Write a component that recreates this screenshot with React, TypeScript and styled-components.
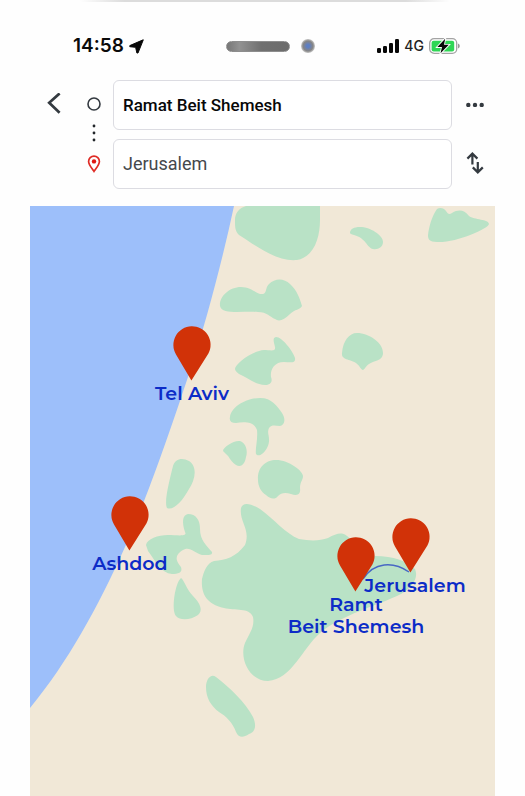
import React, { useState } from "react";
import styled, { createGlobalStyle } from "styled-components";

const GlobalStyle = createGlobalStyle`
  *, *::before, *::after { box-sizing: border-box; }
  html, body { margin: 0; background: #fefefe; }
  body { font-family: Roboto, "Liberation Sans", sans-serif; color: #111; }
`;

const Screen = styled.main`
  display: flex;
  flex-direction: column;
  min-height: 100vh;
  overflow: hidden;
`;

const Bezel = styled.div`
  height: 2px;
  margin: 0 75px 0 80px;
  border-radius: 2px;
  background: linear-gradient(90deg, #fefefe, #dcdcdc 12%, #dcdcdc 88%, #fefefe);
`;

const StatusBar = styled.div`
  display: grid;
  grid-template-columns: 1fr auto 1fr;
  align-items: center;
  height: 78px;
  padding: 10px 65px 0 73px;
  font-family: Inter, "Liberation Sans", sans-serif;
`;

const StatusGroup = styled.div<{ $end?: boolean }>`
  display: flex;
  align-items: center;
  justify-content: ${(p) => (p.$end ? "flex-end" : "flex-start")};
  gap: 5px;
`;

const Clock = styled.time`
  font-size: 19px;
  line-height: 24px;
  font-weight: 600;
  color: #0a0a0a;
`;

const Network = styled.span`
  font-size: 14px;
  line-height: 20px;
  font-weight: 500;
  color: #222;
`;

const Island = styled.div`
  display: flex;
  align-items: center;
  gap: 11px;
  margin-left: 8px;
`;

const Speaker = styled.span`
  width: 64px;
  height: 11px;
  border-radius: 6px;
  border: 1px solid #8d8d8d;
  background: linear-gradient(90deg, #777, #929292 20%, #707070 55%, #6c6c6c);
`;

const Camera = styled.span`
  width: 14px;
  height: 14px;
  border-radius: 50%;
  background: radial-gradient(circle, #5d7fc4 0 15%, #7582a0 34%, #858585 50%, #c4c4c4 70%);
`;

const Planner = styled.form`
  display: grid;
  grid-template-columns: 48px 35px minmax(0, 1fr) 45px;
  grid-template-rows: 50px 50px;
  row-gap: 9px;
  padding: 0 28px 17px 30px;
`;

const IconButton = styled.button`
  display: flex;
  align-items: center;
  justify-content: center;
  padding: 0 0 2px;
  border: 0;
  background: none;
  color: #343a40;
  cursor: pointer;
`;

const RouteMarks = styled.div`
  grid-column: 2;
  grid-row: 1 / 3;
  display: flex;
  flex-direction: column;
  align-items: center;
  justify-content: center;
  gap: 13px;
  margin-right: 3px;
`;

const Place = styled.input<{ $strong?: boolean }>`
  grid-column: 3;
  min-width: 0;
  width: 100%;
  padding: 0 9px;
  border: 1px solid #dcdce2;
  border-radius: 6px;
  background: #fff;
  font: ${(p) => (p.$strong ? "500 17px" : "400 18px")}/24px Roboto, "Liberation Sans", sans-serif;
  color: ${(p) => (p.$strong ? "#080808" : "#45484c")};
  outline-color: #9dbffa;
`;

const MapArea = styled.section`
  flex: 1;
  margin: 0 30px;
  background: #f1e8d7;
`;

const MapDrawing = styled.svg`
  display: block;
  width: 100%;
  height: auto;
`;

const MapLabel = styled.text`
  font-family: Montserrat, Inter, "Liberation Sans", sans-serif;
  font-size: 19px;
  font-weight: 600;
  fill: #0c2cc7;
  text-anchor: middle;
`;

const FORESTS = [
  "M246 206H320V220C320 238 314 257 297 260C276 262 255 245 239 235C235 231 235 227 235 220C235 213 239 208 246 206Z",
  "M350 233C350 229 354 227 360 227C370 227 383 235 383 242C383 247 378 250 373 249C367 248 366 238 354 235Q350 234 350 233Z",
  "M437 209C440 207 444 208 446 211C448 214 449 215 452 213C459 209 464 210 469 216C474 220 489 219 489 224C488 229 456 243 437 242C429 242 428 239 428 235C429 226 432 216 437 209Z",
  "M220 306C219 297 229 287 241 287C252 287 257 295 263 294C267 293 265 288 269 284C275 278 284 278 290 284C297 290 300 299 302 306C300 310 295 309 290 314C284 320 279 322 275 319C270 317 267 312 258 312C242 311 222 315 220 306Z",
  "M235 369C235 364 252 351 264 350C270 350 276 352 275 347C274 342 272 338 276 337C282 337 293 351 295 358C296 364 290 362 284 362C274 362 270 370 271 377C273 382 270 385 265 385C255 385 247 377 239 374Q235 371 235 369Z",
  "M342 353C343 341 349 333 357 333C369 333 384 343 383 354C382 361 375 360 369 364C366 366 364 370 363 370C361 370 360 366 356 363C350 359 341 360 342 353Z",
  "M230 417C231 407 246 398 260 398C272 398 277 406 282 413C287 421 283 426 280 426C276 426 272 424 269 428C266 434 272 438 267 448C263 455 258 457 256 454C255 449 258 440 257 430C254 421 243 422 236 423C231 423 229 421 230 417Z",
  "M223 451C223 447 234 440 240 441C246 443 248 451 246 457C245 463 242 468 236 465C229 460 230 457 226 454Z",
  "M258 480C257 467 266 460 276 460C289 460 303 471 303 476C303 480 300 482 300 488C301 495 297 496 291 494C285 492 281 493 278 496C275 500 270 499 266 495C261 492 258 486 258 480Z",
  "M173 466C175 459 182 457 189 461C198 467 195 480 189 489C182 502 173 511 167 508C164 502 169 482 173 466Z",
  "M146 545C147 539 158 535 168 535C177 535 188 537 185 532C182 523 182 515 188 514C196 514 200 520 200 529C200 540 206 545 212 552C213 556 206 555 202 555C194 553 190 546 183 550C173 556 177 562 181 567C183 573 178 574 172 574C161 573 156 562 148 551Z",
  "M181 578C184 580 187 590 193 596C201 604 203 611 198 615C191 620 180 621 176 616C171 610 175 583 181 578Z",
  "M241 508C243 501 252 504 260 509C274 519 286 534 299 539C310 541 320 541 328 538C340 531 345 532 352 541L375 556C394 556 406 561 415 569C419 578 412 588 401 594C377 606 343 614 320 633C302 649 292 679 268 681C249 681 239 658 245 643C249 634 255 627 253 617C249 607 235 611 224 608C205 604 201 592 202 579C204 571 207 563 214 561C226 560 236 557 245 545C251 529 239 522 241 508Z",
  "M206 687C206 679 211 673 216 677C229 687 246 703 253 717C257 726 255 732 249 734C243 738 239 738 236 732C233 723 226 716 219 712C211 706 206 698 206 687Z",
];

type City = {
  name: string;
  lines: string[];
  tip: [number, number];
  label: [number, number];
};

const CITIES: City[] = [
  { name: "Tel Aviv", lines: ["Tel Aviv"], tip: [191, 380], label: [192, 400] },
  { name: "Ashdod", lines: ["Ashdod"], tip: [129, 550], label: [130, 570] },
  { name: "Jerusalem", lines: ["Jerusalem"], tip: [410, 572], label: [415, 592] },
  { name: "Beit Shemesh", lines: ["Ramt", "Beit Shemesh"], tip: [355, 591], label: [356, 611] },
];

function Signal() {
  return (
    <svg width="22" height="14" viewBox="0 0 22 14" fill="#080808" aria-hidden="true">
      <rect x="0" y="9" width="4" height="5" rx="1.2" />
      <rect x="6" y="7" width="4" height="7" rx="1.2" />
      <rect x="12" y="4" width="4" height="10" rx="1.2" />
      <rect x="18" y="0" width="4" height="14" rx="1.2" />
    </svg>
  );
}

function Battery() {
  return (
    <svg width="31" height="16" viewBox="0 0 31 16" aria-hidden="true">
      <rect x="0.7" y="0.7" width="27" height="14.6" rx="4.4" fill="#fff" stroke="#a3a3a3" strokeWidth="1.3" />
      <rect x="2.6" y="2.8" width="22.6" height="10.6" rx="2" fill="#2fd655" />
      <path d="M29 5.6q1.8 .6 1.8 2.4t-1.8 2.4z" fill="#999" />
      <path d="M16.2 0.7L8.3 9.1H13L11.5 15.3L19.8 6.8H15Z" fill="#080808" stroke="#fff" strokeWidth="1.8" paintOrder="stroke" />
    </svg>
  );
}

function Pin({ x, y }: { x: number; y: number }) {
  return (
    <path
      transform={`translate(${x} ${y})`}
      fill="#d13208"
      d="M0.4 0.5L-15 -25.6A18.6 18.6 0 1 1 17.4 -26.4Z"
    />
  );
}

export default function App() {
  const [from, setFrom] = useState("Ramat Beit Shemesh");
  const [to, setTo] = useState("Jerusalem");
  const swap = () => {
    setFrom(to);
    setTo(from);
  };

  return (
    <>
      <GlobalStyle />
      <Screen>
        <Bezel />
        <StatusBar>
          <StatusGroup>
            <Clock>14:58</Clock>
            <svg width="15" height="15" viewBox="0 0 15 15" fill="#080808" aria-hidden="true">
              <path d="M14.2 .8L.8 6.6V7.7L6.6 8.3L7.9 14H9L14.3 .8Z" stroke="#080808" strokeWidth="1" strokeLinejoin="round" />
            </svg>
          </StatusGroup>
          <Island>
            <Speaker />
            <Camera />
          </Island>
          <StatusGroup $end>
            <Signal />
            <Network>4G</Network>
            <Battery />
          </StatusGroup>
        </StatusBar>

        <Planner onSubmit={(e) => e.preventDefault()}>
          <IconButton type="button" aria-label="Back">
            <svg width="14" height="22" viewBox="0 0 14 22" fill="none" stroke="currentColor" strokeWidth="2.7">
              <path d="M12.6 .4L2.2 9.8L12.6 19.8" />
            </svg>
          </IconButton>
          <RouteMarks aria-hidden="true">
            <svg width="14" height="14" viewBox="0 0 14 14" fill="none" stroke="#343a40" strokeWidth="1.6">
              <circle cx="7" cy="7" r="6" />
            </svg>
            <svg width="4" height="18" viewBox="0 0 4 18" fill="#22262a">
              <circle cx="2" cy="2" r="1.4" />
              <circle cx="2" cy="9" r="1.4" />
              <circle cx="2" cy="16" r="1.4" />
            </svg>
            <svg width="14" height="18" viewBox="0 0 14 18" fill="none">
              <path d="M7 16.4C5 13.4 1.6 9.7 1.6 6.5a5.4 5.4 0 0 1 10.8 0C12.4 9.7 9 13.4 7 16.4Z" stroke="#df2b25" strokeWidth="1.7" />
              <circle cx="7" cy="6.4" r="2.2" fill="#df1712" />
            </svg>
          </RouteMarks>
          <Place $strong aria-label="From" value={from} onChange={(e) => setFrom(e.target.value)} />
          <IconButton type="button" aria-label="More options">
            <svg width="18" height="6" viewBox="0 0 18 6" fill="currentColor">
              <circle cx="2.3" cy="4" r="2.2" />
              <circle cx="9" cy="4" r="2.2" />
              <circle cx="15.7" cy="4" r="2.2" />
            </svg>
          </IconButton>
          <Place aria-label="To" value={to} onChange={(e) => setTo(e.target.value)} />
          <IconButton type="button" aria-label="Swap start and destination" onClick={swap}>
            <svg width="18" height="22" viewBox="0 0 18 22" fill="none" stroke="currentColor" strokeWidth="2.2">
              <path d="M6.4 12.5V1.8M1.4 6.6L6.4 1.6L11.4 6.6M11.8 10V20.3M6.8 15.4L11.8 20.4L16.8 15.4" />
            </svg>
          </IconButton>
        </Planner>

        <MapArea aria-label="Map">
          <MapDrawing viewBox="30 206 465 590">
            <path d="M30 206H234C222 262 206 322 190 371C164 449 144 505 125 547C98 607 68 662 30 708Z" fill="#9dbffa" />
            {FORESTS.map((d) => (
              <path key={d} d={d} fill="#b9e2c6" />
            ))}
            <path d="M363 579C374 562 393 561 409 572" fill="none" stroke="#4868c4" strokeWidth="1.4" />
            {CITIES.map((city) => (
              <g key={city.name}>
                <Pin x={city.tip[0]} y={city.tip[1]} />
                {city.lines.map((line, i) => (
                  <MapLabel key={line} x={city.label[0]} y={city.label[1] + i * 22}>
                    {line}
                  </MapLabel>
                ))}
              </g>
            ))}
          </MapDrawing>
        </MapArea>
      </Screen>
    </>
  );
}
